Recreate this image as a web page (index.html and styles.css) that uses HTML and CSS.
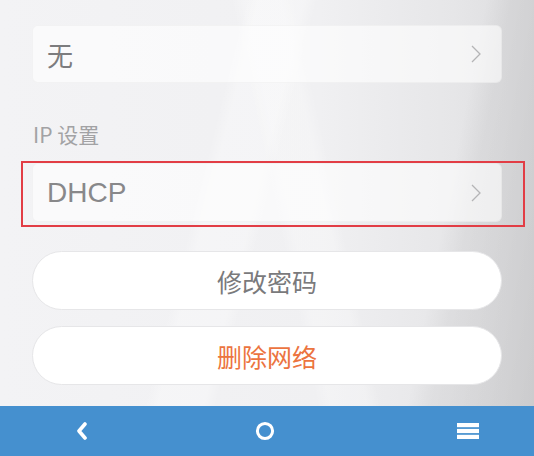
FILE: index.html
```html
<!DOCTYPE html>
<html lang="zh-CN">
<head>
    <meta charset="UTF-8">
    <meta name="viewport" content="width=device-width, initial-scale=1.0">
    <title>WLAN 设置</title>
    <link rel="stylesheet" href="styles.css">
</head>
<body>

<div class="screen">
    <div class="content">
        <!-- proxy choice -->
        <div class="select-row">
            <span class="select-value">无</span>
            <svg class="chevron" width="10" height="18" viewBox="0 0 10 18">
                <polyline points="1,1 9,9 1,17" fill="none" stroke="#b4b4b6" stroke-width="1.3"/>
            </svg>
        </div>

        <div class="section-label">IP 设置</div>

        <div class="highlight">
            <div class="select-row tall">
                <span class="select-value latin">DHCP</span>
                <svg class="chevron" width="10" height="18" viewBox="0 0 10 18">
                    <polyline points="1,1 9,9 1,17" fill="none" stroke="#b4b4b6" stroke-width="1.3"/>
                </svg>
            </div>
        </div>

        <button class="pill first">修改密码</button>
        <button class="pill danger">删除网络</button>
    </div>

    <!-- system navigation -->
    <nav class="navbar">
        <svg class="nav-back" width="14" height="18" viewBox="0 0 14 18">
            <polyline points="10,2 4,9 10,16" fill="none" stroke="#fff" stroke-width="3.6" stroke-linecap="round" stroke-linejoin="round"/>
        </svg>
        <svg class="nav-home" width="22" height="22" viewBox="0 0 22 22">
            <circle cx="11" cy="11" r="7.6" fill="none" stroke="#fff" stroke-width="3"/>
        </svg>
        <svg class="nav-menu" width="22" height="18" viewBox="0 0 22 18">
            <rect x="0" y="1" width="22" height="4.2" fill="#fff"/>
            <rect x="0" y="6.9" width="22" height="4.2" fill="#fff"/>
            <rect x="0" y="12.8" width="22" height="4.2" fill="#fff"/>
        </svg>
    </nav>
</div>

</body>
</html>
```

FILE: styles.css
```css
body {
    margin: 0;
    font-family: "Noto Sans CJK SC", "Noto Sans", sans-serif;
}
.screen {
    height: 456px;
    display: flex;
    flex-direction: column;
    overflow: hidden;
    background-color: #efeff1;
    background-image:
        linear-gradient(104deg, rgba(255,255,255,0) 38%, rgba(255,255,255,0.3) 40%, rgba(255,255,255,0.3) 47%, rgba(255,255,255,0) 49%),
        linear-gradient(78deg, rgba(255,255,255,0) 52%, rgba(255,255,255,0.25) 54%, rgba(255,255,255,0.25) 60%, rgba(255,255,255,0) 62%),
        linear-gradient(101deg, rgba(0,0,0,0) 78%, rgba(0,0,0,0.04) 82%, rgba(0,0,0,0.08) 100%),
        linear-gradient(to right, #f3f3f5 0%, #f0f0f2 60%, #e6e6e8 85%, #dcdcde 100%);
}
.content {
    flex: 1;
    padding: 25px 32px 0;
}
.select-row {
    height: 58px;
    display: flex;
    align-items: center;
    justify-content: space-between;
    padding: 0 20px 0 14px;
    background-color: rgba(255, 255, 255, 0.6);
    border: 1px solid rgba(0, 0, 0, 0.03);
    border-radius: 6px;
    box-sizing: border-box;
}
.select-row.tall {
    height: 59px;
}
.select-value {
    font-size: 26px;
    color: #7c7c7e;
}
.select-value.latin {
    font-family: "Liberation Sans", Arial, sans-serif;
    font-size: 28px;
    color: #88888a;
}
.section-label {
    padding: 36px 0 12px 1px;
    line-height: 30px;
    font-size: 21px;
    color: #a2a2a4;
}
.highlight {
    margin: 0 -23px 0 -11px;
    padding: 0 21px 3px 9px;
    border: 2px solid #e23d45;
}
.pill {
    display: block;
    width: 100%;
    height: 59px;
    border: 1px solid #e6e6e8;
    border-radius: 30px;
    background-color: #fff;
    font-family: "Noto Sans CJK SC", sans-serif;
    font-size: 25px;
    color: #7a7a7c;
    cursor: pointer;
}
.pill.first {
    margin-top: 24px;
}
.pill.danger {
    margin-top: 16px;
    color: #ec7440;
}
.navbar {
    height: 50px;
    display: flex;
    align-items: center;
    padding-left: 75px;
    background-color: #4590cf;
}
.nav-home {
    margin-left: 165px;
}
.nav-menu {
    margin-left: 181px;
}
```
